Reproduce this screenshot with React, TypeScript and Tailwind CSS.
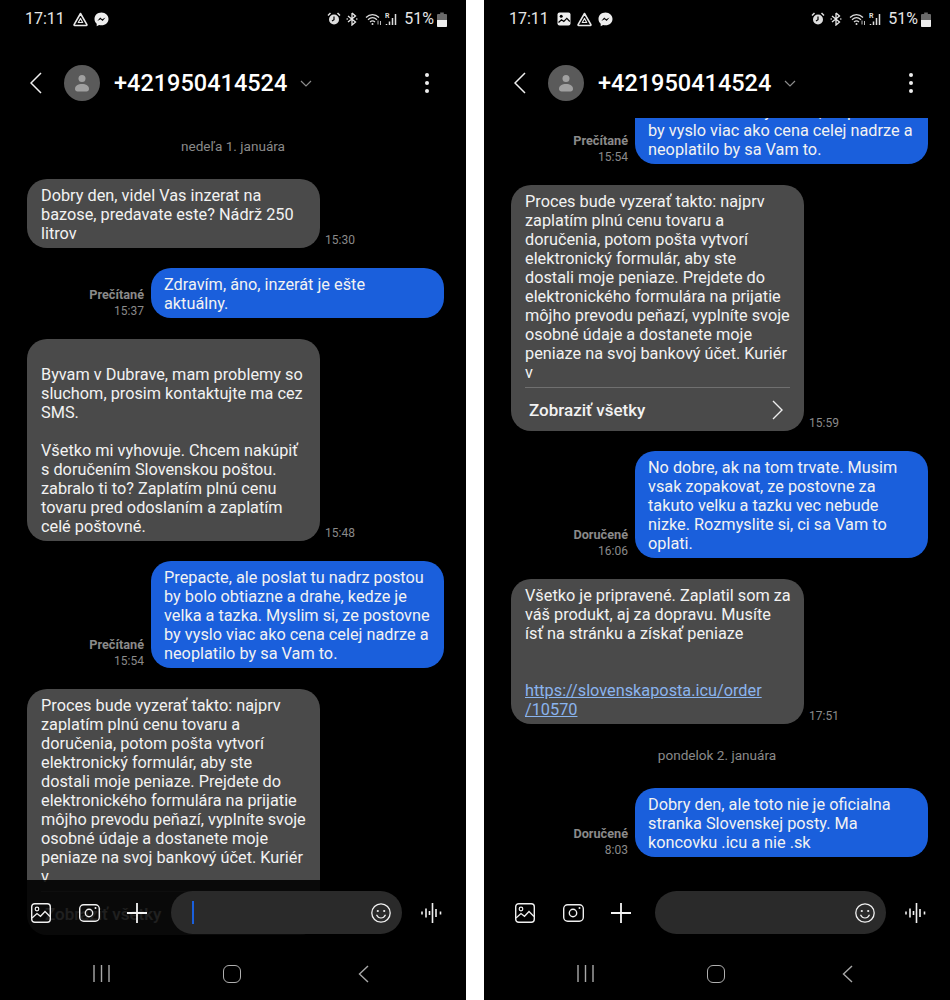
import { ReactNode } from 'react';

type Msg =
  | { kind: 'date'; text: string }
  | { kind: 'in'; text: string; time: string; link?: string; more?: boolean }
  | { kind: 'out'; text: string; time: string; status: string };

const messages: Msg[] = [
  { kind: 'date', text: 'nedeľa 1. januára' },
  { kind: 'in', text: 'Dobry den, videl Vas inzerat na\nbazose, predavate este? Nádrž 250\nlitrov', time: '15:30' },
  { kind: 'out', text: 'Zdravím, áno, inzerát je ešte\naktuálny.', time: '15:37', status: 'Prečítané' },
  {
    kind: 'in',
    text: '\u00a0\nByvam v Dubrave, mam problemy so\nsluchom, prosim kontaktujte ma cez\nSMS.\n\u00a0\nVšetko mi vyhovuje. Chcem nakúpiť\ns doručením Slovenskou poštou.\nzabralo ti to? Zaplatím plnú cenu\ntovaru pred odoslaním a zaplatím\ncelé poštovné.',
    time: '15:48',
  },
  {
    kind: 'out',
    text: 'Prepacte, ale poslat tu nadrz postou\nby bolo obtiazne a drahe, kedze je\nvelka a tazka. Myslim si, ze postovne\nby vyslo viac ako cena celej nadrze a\nneoplatilo by sa Vam to.',
    time: '15:54',
    status: 'Prečítané',
  },
  {
    kind: 'in',
    text: 'Proces bude vyzerať takto: najprv\nzaplatím plnú cenu tovaru a\ndoručenia, potom pošta vytvorí\nelektronický formulár, aby ste\ndostali moje peniaze. Prejdete do\nelektronického formulára na prijatie\nmôjho prevodu peňazí, vyplníte svoje\nosobné údaje a dostanete moje\npeniaze na svoj bankový účet. Kuriér\nv',
    time: '15:59',
    more: true,
  },
  {
    kind: 'out',
    text: 'No dobre, ak na tom trvate. Musim\nvsak zopakovat, ze postovne za\ntakuto velku a tazku vec nebude\nnizke. Rozmyslite si, ci sa Vam to\noplati.',
    time: '16:06',
    status: 'Doručené',
  },
  {
    kind: 'in',
    text: 'Všetko je pripravené. Zaplatil som za\nváš produkt, aj za dopravu. Musíte\nísť na stránku a získať peniaze\n\u00a0\n\u00a0',
    link: 'https://slovenskaposta.icu/order\n/10570',
    time: '17:51',
  },
  { kind: 'date', text: 'pondelok 2. januára' },
  {
    kind: 'out',
    text: 'Dobry den, ale toto nie je oficialna\nstranka Slovenskej posty. Ma\nkoncovku .icu a nie .sk',
    time: '8:03',
    status: 'Doručené',
  },
];

function Icon({ w, h, children, className = '' }: { w: number; h: number; children: ReactNode; className?: string }) {
  return (
    <svg width={w} height={h} viewBox={`0 0 ${w} ${h}`} fill="none" className={`shrink-0 ${className}`}>
      {children}
    </svg>
  );
}

function DriveIcon() {
  return (
    <Icon w={15} h={15}>
      <path d="M7.500 1.500 13.900 12.600a.6.6 0 0 1-.5.9H1.600a.6.6 0 0 1-.5-.9Z" stroke="#e8e8e8" strokeWidth="1.600" strokeLinejoin="round" />
      <path d="M7.500 6.500 9.700 10.500H5.300Z" stroke="#e8e8e8" strokeWidth="1.200" strokeLinejoin="round" />
    </Icon>
  );
}

function MessengerIcon() {
  return (
    <Icon w={15} h={15}>
      <path d="M7.500.5C3.400.5.500 3.300.500 7c0 2 .9 3.600 2.200 4.700v2.600l2.400-1.300c.7.2 1.500.3 2.400.3 4.100 0 7-2.900 7-6.300S11.600.5 7.500.5Z" fill="#eee" />
      <path d="M3.300 9 6.200 5.600l2 1.600 3.300-1.700-2.900 3.500-2-1.700Z" fill="#000" />
    </Icon>
  );
}

function GalleryStatusIcon() {
  return (
    <Icon w={14} h={14}>
      <rect x="0.500" y="0.500" width="13" height="13" rx="2" fill="#eee" />
      <circle cx="4.200" cy="4.300" r="1.500" fill="#000" />
      <path d="m1.500 10.500 3-2.800 2.300 1.800 3-3.200 3 3.200" stroke="#000" strokeWidth="1.200" />
    </Icon>
  );
}

function StatusRight() {
  return (
    <div className="flex items-center">
      <Icon w={14} h={14}>
        <circle cx="7" cy="7.500" r="5" fill="#ddd" />
        <path d="M1 3.500 3.500 1M13 3.500 10.500 1" stroke="#ddd" strokeWidth="1.500" />
        <path d="M7 4.500v3.200l-2 1.300" stroke="#000" strokeWidth="1.200" />
      </Icon>
      <Icon w={12} h={14} className="ml-[5px]">
        <path d="M6 1v12l3.500-3L2 4M6 1l3.500 3L2 10" stroke="#e8e8e8" strokeWidth="1.300" />
        <circle cx="1.200" cy="7" r="0.800" fill="#e8e8e8" />
        <circle cx="10.800" cy="7" r="0.800" fill="#e8e8e8" />
      </Icon>
      <Icon w={17} h={14} className="ml-[7px]">
        <path d="M1 5.500C4.800 1.700 10.200 1.700 14 5.500M3 7.800c2.700-2.600 6.300-2.600 9 0M5 10c1.500-1.300 3.500-1.300 5 0" stroke="#ddd" strokeWidth="1.200" />
        <circle cx="7.500" cy="12" r="1" fill="#ddd" />
        <path d="M13 8.500v4M15.500 9v4" stroke="#bbb" strokeWidth="1" />
      </Icon>
      <Icon w={13} h={14} className="ml-[3px]">
        <text x="0" y="6" fontSize="7" fontWeight="700" fill="#ddd" fontFamily="Roboto, sans-serif">R</text>
        <path d="M1.500 12v1M4.500 9.500V13M7.500 6v7M10.500 2v11" stroke="#ddd" strokeWidth="1.500" />
      </Icon>
      <span className="ml-[6px] text-[16px] leading-[20px] text-[#e6e6e6]">51%</span>
      <Icon w={10} h={15} className="ml-[3px]">
        <path d="M3.200 0.500h3.600V2H9a1 1 0 0 1 1 1v11a1 1 0 0 1-1 1H1a1 1 0 0 1-1-1V3a1 1 0 0 1 1-1h2.200Z" fill="#6a6a6a" />
        <path d="M0 8h10v6a1 1 0 0 1-1 1H1a1 1 0 0 1-1-1Z" fill="#eee" />
      </Icon>
    </div>
  );
}

function StatusBar({ gallery }: { gallery?: boolean }) {
  return (
    <div className="flex h-[38px] items-center justify-between pl-[25px] pr-[19px]">
      <div className="flex items-center gap-[6px]">
        <span className="mr-[2px] text-[16px] leading-[20px] text-[#e6e6e6]">17:11</span>
        {gallery && <GalleryStatusIcon />}
        <DriveIcon />
        <MessengerIcon />
      </div>
      <StatusRight />
    </div>
  );
}

function Header() {
  return (
    <div className="flex h-[80px] items-center pl-[30px] pt-[10px]">
      <Icon w={12} h={22}>
        <path d="M11 1 1 11l10 10" stroke="#f0f0f0" strokeWidth="1.500" />
      </Icon>
      <div className="ml-[22px] flex h-[36px] w-[36px] items-center justify-center rounded-full bg-[#5a5a5a]">
        <Icon w={14} h={18}>
          <circle cx="7" cy="4.500" r="3.500" fill="#a0a0a0" />
          <path d="M0 15c0-3.500 3-5 7-5s7 1.500 7 5c0 1.500-1 2.500-2.500 2.500h-9C1 17.500 0 16.500 0 15Z" fill="#a0a0a0" />
        </Icon>
      </div>
      <span className="ml-[14px] text-[23.500px] leading-[30px] font-medium text-white">+421950414524</span>
      <Icon w={12} h={7} className="ml-[13px]">
        <path d="m1 1 5 5 5-5" stroke="#8c8c8c" strokeWidth="1.200" />
      </Icon>
      <div className="ml-auto mr-[37px] flex flex-col gap-[4px]">
        <span className="h-[4px] w-[4px] rounded-full bg-[#eee]" />
        <span className="h-[4px] w-[4px] rounded-full bg-[#eee]" />
        <span className="h-[4px] w-[4px] rounded-full bg-[#eee]" />
      </div>
    </div>
  );
}

function MessageRow({ msg }: { msg: Msg }) {
  if (msg.kind === 'date') {
    return <div className="my-[2px] text-center text-[13.600px] leading-[19px] text-[#8a8a8a]">{msg.text}</div>;
  }
  if (msg.kind === 'out') {
    return (
      <div className="flex items-end justify-end pr-[22px]">
        <div className="mb-[-2px] mr-[7px] flex flex-col items-end text-[12px] leading-[17px] text-[#8a8a8a]">
          <span className="text-[12.700px] font-bold">{msg.status}</span>
          <span>{msg.time}</span>
        </div>
        <div className="w-[293px] rounded-[20px] bg-[#1a5fdc] px-[13px] pb-[5px] pt-[7px] text-[16.300px] leading-[19px] whitespace-pre text-[#f2f2f2]">
          {msg.text}
        </div>
      </div>
    );
  }
  return (
    <div className="flex items-end pl-[27px]">
      <div className="w-[293px] rounded-[20px] bg-[#4a4a4a] px-[14px] pb-[5px] pt-[7px] text-[16.300px] leading-[19px] whitespace-pre text-[#f2f2f2]">
        {msg.text}
        {msg.link && (
          <>
            {'\n'}
            <span className="text-[#8ab4ee] underline">{msg.link}</span>
          </>
        )}
        {msg.more && (
          <div className="mt-[5px] flex h-[39px] items-center justify-between border-t border-[#707070] pl-[4px] pr-[7px] pt-[7px]">
            <span className="text-[17px] font-medium">Zobraziť všetky</span>
            <Icon w={11} h={20}>
              <path d="m1 1 9 9-9 9" stroke="#eee" strokeWidth="1.400" />
            </Icon>
          </div>
        )}
      </div>
      <span className="ml-[5px] text-[12px] leading-[15px] text-[#8a8a8a]">{msg.time}</span>
    </div>
  );
}

function Composer({ cursor }: { cursor?: boolean }) {
  return (
    <div className="absolute inset-x-0 bottom-0 flex h-[60px] items-center bg-black/[0.87] pl-[31px] pt-[5px]">
      <Icon w={20} h={20}>
        <rect x="0.700" y="0.700" width="18.600" height="18.600" rx="3" stroke="#f0f0f0" strokeWidth="1.400" />
        <circle cx="6" cy="6" r="1.800" stroke="#f0f0f0" strokeWidth="1.200" />
        <path d="m1 15 5-4.500 3.500 2.800 4.500-4.800 5 5" stroke="#f0f0f0" strokeWidth="1.300" />
      </Icon>
      <Icon w={21} h={18} className="ml-[28px]">
        <rect x="0.700" y="0.700" width="19.600" height="16.600" rx="4" stroke="#f0f0f0" strokeWidth="1.400" />
        <circle cx="10" cy="9" r="3.700" stroke="#f0f0f0" strokeWidth="1.400" />
        <circle cx="16.500" cy="4" r="1" fill="#f0f0f0" />
      </Icon>
      <Icon w={20} h={20} className="ml-[27px]">
        <path d="M10 0v20M0 10h20" stroke="#f4f4f4" strokeWidth="1.800" />
      </Icon>
      <div className="ml-[24px] flex h-[43px] w-[231px] items-center justify-between rounded-full bg-[#2a2a2a] pl-[21px] pr-[11px]">
        <span className={cursor ? 'h-[23px] w-[2px] bg-[#1a5fdc]' : 'h-[23px] w-[2px]'} />
        <Icon w={20} h={20}>
          <circle cx="10" cy="10" r="9.200" stroke="#f0f0f0" strokeWidth="1.300" />
          <circle cx="6.800" cy="8" r="1.100" fill="#f0f0f0" />
          <circle cx="13.200" cy="8" r="1.100" fill="#f0f0f0" />
          <path d="M5.500 11.800c1 2.200 2.700 3.200 4.500 3.200s3.500-1 4.500-3.200" stroke="#f0f0f0" strokeWidth="1.200" />
        </Icon>
      </div>
      <Icon w={21} h={20} className="ml-[19px]">
        <path d="M1 8.500v3M5 5.500v9M8.500 8v4M11.500 0v20M15 6v8M19.500 8.500v3" stroke="#f0f0f0" strokeWidth="1.600" />
      </Icon>
    </div>
  );
}

function NavBar() {
  return (
    <div className="flex h-[60px] items-start justify-center pr-[2px] pt-[25px]">
      <div className="flex w-[131px] justify-center">
        <Icon w={17} h={17}>
          <path d="M1 0v17M8.500 0v17M16 0v17" stroke="#a8a8a8" strokeWidth="1.400" />
        </Icon>
      </div>
      <div className="flex w-[131px] justify-center">
        <span className="h-[18px] w-[18px] rounded-[6px] border-[1.500px] border-[#b0b0b0]" />
      </div>
      <div className="flex w-[131px] justify-center">
        <Icon w={11} h={18}>
          <path d="M10 1 1.500 9l8.500 8" stroke="#a8a8a8" strokeWidth="1.400" />
        </Icon>
      </div>
    </div>
  );
}

function Phone({ scrolled }: { scrolled?: boolean }) {
  // only the rows that are on screen in each shot
  const rows = scrolled ? messages.slice(4) : messages.slice(0, 6);
  return (
    <div className="flex h-[1000px] w-[466px] flex-col overflow-hidden bg-black">
      <StatusBar gallery={scrolled} />
      <Header />
      <div className="relative min-h-0 flex-1 overflow-hidden">
        <div className={scrolled ? 'mt-[-61px] flex flex-col gap-[20.500px]' : 'flex flex-col gap-[20.500px] pt-[17px]'}>
          {rows.map((m, i) => (
            <MessageRow key={i} msg={m} />
          ))}
        </div>
        <Composer cursor={!scrolled} />
      </div>
      <NavBar />
    </div>
  );
}

export default function App() {
  return (
    <div className="flex h-[1000px] w-[950px] justify-between overflow-hidden bg-white [font-family:Roboto,sans-serif]">
      <Phone />
      <Phone scrolled />
    </div>
  );
}
